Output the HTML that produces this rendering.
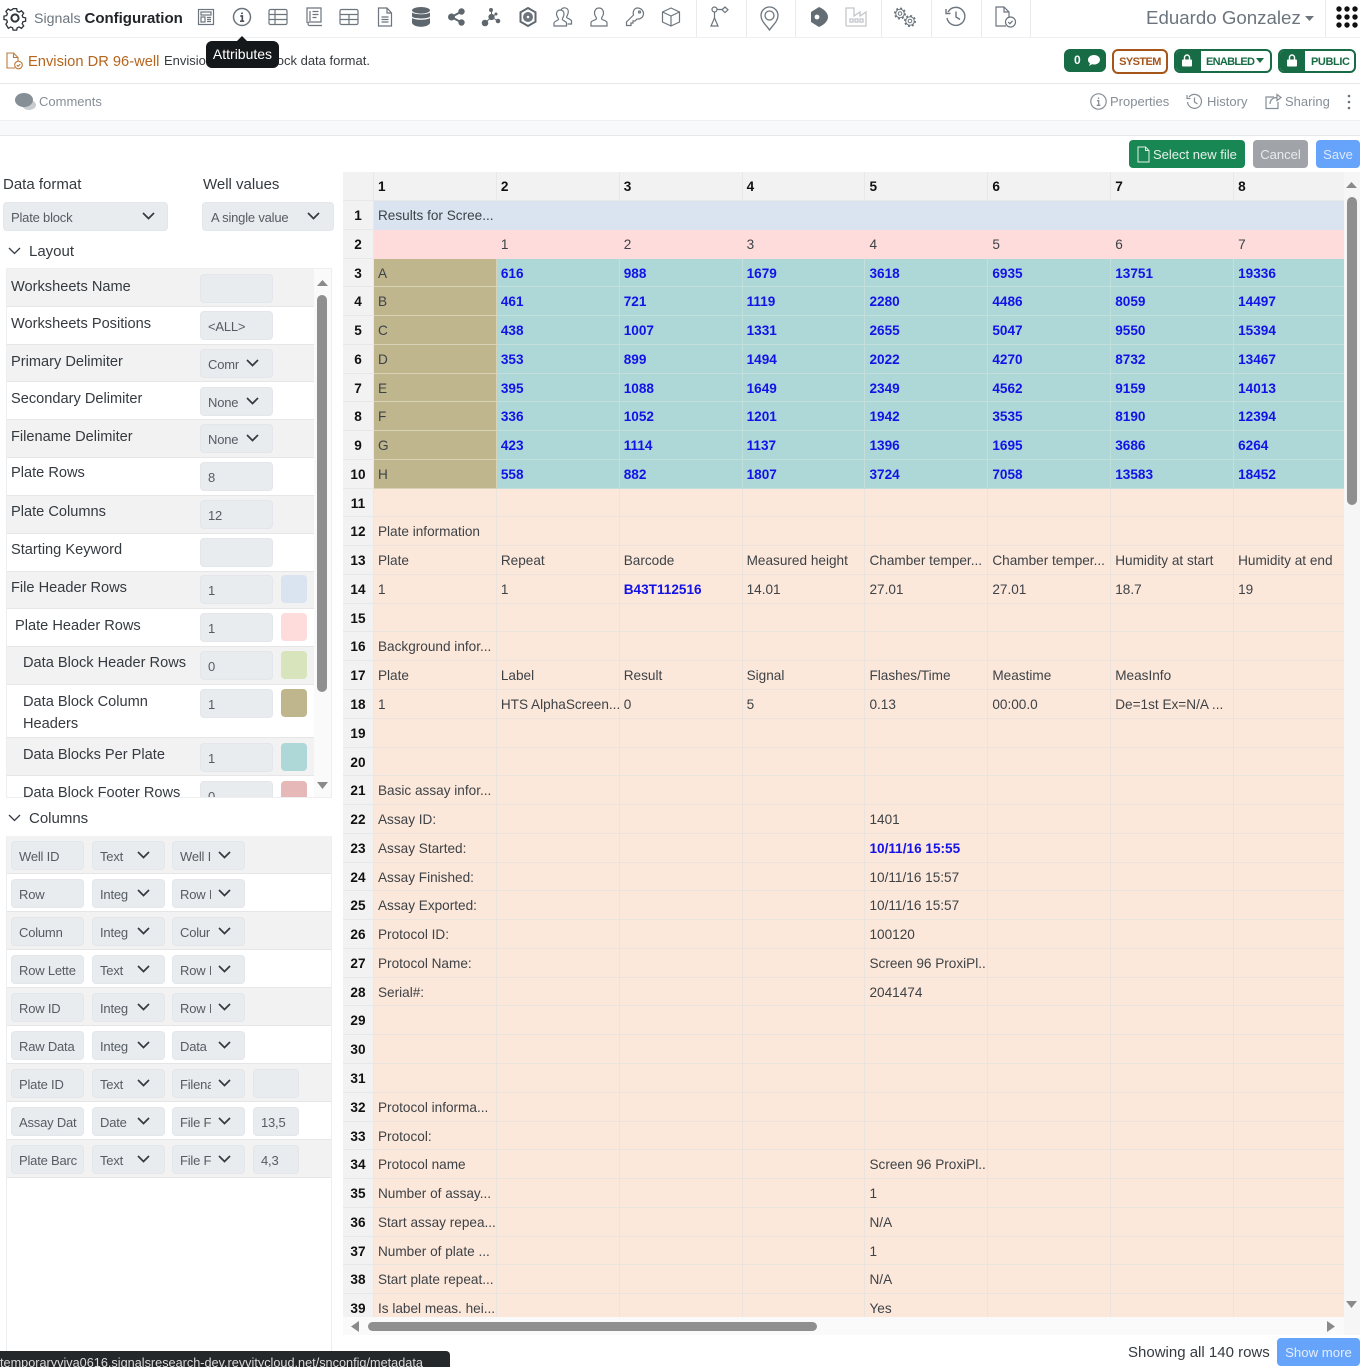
<!DOCTYPE html>
<html lang="en"><head><meta charset="utf-8"><title>Signals Configuration</title>
<style>
*{box-sizing:border-box}
html,body{margin:0;padding:0;background:#fff}
body{width:1360px;height:1367px;position:relative;overflow:hidden;font-family:"Liberation Sans",sans-serif;font-size:14px;color:#343a40}
.a{position:absolute;white-space:nowrap}
.line{position:absolute;background:#e9ecef}
svg{position:absolute;overflow:visible}
.ic{fill:none;stroke:#6c757d;stroke-width:1.2}
.t{position:absolute;left:343px;top:172px;width:1001px;height:1145px;overflow:hidden}
.r{display:flex;height:28.77px}
.r>div{height:100%;width:123px;padding:0 4px;line-height:30px;font-size:13.6px;white-space:nowrap;overflow:hidden;border-right:1px solid #e6e3df;border-bottom:1px solid #e6e3df;color:#3d4247}
.r>div:first-child{width:31px;background:#f2f2f2;text-align:center;font-weight:bold;color:#111;padding:0;border-color:#e8e8e8}
.r>div:last-child{width:110px;border-right:0}
.r.h{height:29px}
.h>div{background:#f2f2f2;font-weight:bold;color:#111;line-height:29px;border-color:#e8e8e8}
.b>div{background:#dae4f0;border-color:#dae4f0}
.p>div{background:#fddcdb;border-color:#fddcdb}
.d>div{background:#aed8d7;border-color:#c4dedb;font-weight:bold;color:#1212e8}
.d>div:nth-child(2){background:#bfb68e;font-weight:normal;color:#3d4247;border-color:#d8d2b6}
.o>div{background:#fce8da;border-color:#ebe4de}
.r>div:first-child{background:#f2f2f2;color:#111;font-weight:bold;border-color:#e8e8e8}
.h>div:first-child{line-height:29px}
.bl{font-weight:bold;color:#1212e8!important}
.lr{position:absolute;left:7px;width:307px;border-bottom:1px solid #e6e6e6}
.gr{background:#f2f2f2}
.lr span{position:absolute;top:6px;font-size:14.6px;line-height:22px;color:#343a40;white-space:nowrap}
.inp{position:absolute;height:29px;background:#e9ecef;border:1px solid #e3e6ea;border-radius:4px;font-size:13px;letter-spacing:-.2px;color:#555c63;line-height:29px;padding-left:7px;white-space:nowrap;overflow:hidden}
.cl{display:block;overflow:hidden}
.sw{position:absolute;left:281px;width:26px;height:28px;border-radius:4px}
.cr{position:absolute;left:7px;width:324px;height:38px;border-bottom:1px solid #e6e6e6}
.chev{fill:none;stroke:#343a40;stroke-width:1.7}
</style></head><body>

<!-- top bar -->
<svg style="left:3px;top:6px" width="24" height="24" viewBox="0 0 24 24"><path class="ic" style="stroke:#2f343a;stroke-width:1.5" d="M10 2h4l.6 3 2.2 1 2.6-1.600 2.600 2.800-1.700 2.500.9 2.200 3 .6v3.800l-3 .6-.9 2.200 1.700 2.500-2.600 2.800-2.600-1.600-2.200 1-.6 2.600h-4l-.6-2.600-2.200-1-2.600 1.600L1.800 19.600l1.700-2.500-.9-2.200-3-.6v-3.800l3-.6.9-2.200L1.800 5.200 4.400 2.400 7 4l2.400-1z" transform="scale(.88) translate(1.500,1)"/><circle cx="12" cy="12" r="3.600" fill="none" stroke="#2f343a" stroke-width="2"/></svg>
<div class="a" style="left:34px;top:9px;font-size:14.200px;line-height:20px;color:#6c757d">Signals <b style="color:#212529;font-size:15px">Configuration</b></div>

<svg style="left:197px;top:8px" width="18" height="18" viewBox="0 0 18 18"><g class="ic"><rect x="1.500" y="1.500" width="15" height="15"/><rect x="4" y="4" width="10" height="3"/><rect x="4" y="9" width="4" height="5"/><path d="M10 9.500h4M10 11.500h4M10 13.500h4"/></g></svg>
<svg style="left:232px;top:7px" width="20" height="20" viewBox="0 0 20 20"><circle class="ic" style="stroke-width:1.500" cx="10" cy="10" r="8.500"/><path d="M10 5.500v1.600M8.300 9h2v5M8 14.200h4.200" fill="none" stroke="#495057" stroke-width="1.700"/></svg>
<svg style="left:268px;top:8px" width="20" height="18" viewBox="0 0 20 18"><g class="ic"><rect x="1" y="1.500" width="18" height="15" rx="1.500"/><path d="M1 6.500h18M1 11.500h18M7 1.500v15"/></g></svg>
<svg style="left:305px;top:7px" width="18" height="20" viewBox="0 0 18 20"><g class="ic"><path d="M2 16V1h14v14H4a2 2 0 0 0 0 3.500h13"/><path d="M5 4v10M7.500 4.500h6M7.500 7.500h6M7.500 10.500h4"/></g></svg>
<svg style="left:339px;top:8px" width="20" height="18" viewBox="0 0 20 18"><g class="ic"><rect x="1" y="1.500" width="18" height="15" rx="1.500"/><path d="M1 6.500h18M1 11.500h18M10 6.500v10"/></g></svg>
<svg style="left:377px;top:7px" width="16" height="20" viewBox="0 0 16 20"><g class="ic"><path d="M1.500 1h8.500l4.500 5v13h-13zM10 1v5h4.500"/><path d="M4.500 10h7M4.500 12.500h7M4.500 15h7"/></g></svg>
<svg style="left:412px;top:7px" width="18" height="20" viewBox="0 0 18 20"><g fill="#5f676e"><ellipse cx="9" cy="3.300" rx="9" ry="3.300"/><path d="M0 5.500c2 2.300 16 2.300 18 0V9.500c-2 2.600-16 2.600-18 0zM0 11c2 2.300 16 2.300 18 0v5c-2 5-16 5-18 0z"/></g></svg>
<svg style="left:448px;top:8px" width="18" height="18" viewBox="0 0 18 18"><g fill="#5f676e"><circle cx="3.500" cy="9" r="3.500"/><circle cx="13.500" cy="3.500" r="3.200"/><circle cx="13.500" cy="14.500" r="3.200"/><path d="M3.500 9l10-5.500M3.500 9l10 5.500" stroke="#5f676e" stroke-width="2"/></g></svg>
<svg style="left:482px;top:8px" width="19" height="18" viewBox="0 0 19 18"><g fill="#5f676e" stroke="#5f676e"><circle cx="9.500" cy="9" r="2.600"/><circle cx="9" cy="2" r="1.500"/><circle cx="3" cy="15" r="2.800"/><circle cx="16" cy="13" r="1.800"/><circle cx="14" cy="6" r="1"/><path d="M9.500 9V2M9.500 9L3 15M9.500 9L16 13M9.500 9L14 6"/></g></svg>
<svg style="left:519px;top:7px" width="18" height="20" viewBox="0 0 18 20"><path d="M9 1l7.500 4.300v9.400L9 19l-7.500-4.300V5.300z" fill="none" stroke="#5f676e" stroke-width="2"/><circle cx="9" cy="10" r="5" fill="#6c757d"/><circle cx="9" cy="10" r="1.300" fill="#fff"/></svg>
<svg style="left:553px;top:7px" width="20" height="20" viewBox="0 0 20 20"><g class="ic"><path d="M1 19v-3c0-1.500 4-2.500 4.500-3.500S3.500 10 3.500 7c0-2.500 1.500-4 3.800-4S11 4.500 11 7c0 3-2 4.500-1.700 5.500S13.500 14.500 13.500 16v3z"/><path d="M8 3c.7-1.500 2-2.200 3.600-2.200 2.300 0 3.700 1.500 3.700 4 0 3-2 4.500-1.700 5.500S18.500 12.500 18.500 14v3h-4"/></g></svg>
<svg style="left:590px;top:7px" width="18" height="20" viewBox="0 0 18 20"><path class="ic" d="M1 19v-3.500c0-1.700 5-2.500 5.500-3.700S4.500 9.500 4.500 6c0-3 1.800-5 4.500-5s4.500 2 4.500 5c0 3.500-2.500 4.600-2 5.800S17 13.800 17 15.500V19z"/></svg>
<svg style="left:625px;top:7px" width="20" height="20" viewBox="0 0 20 20"><g class="ic"><path d="M12.500 1c3.500 0 6 2.700 6 5.500 0 3.500-3 6-6.500 5.500l-2 2H8v2H6v2.500H1.500v-3.500l7-7C7.500 4 9.500 1 12.500 1z"/><circle cx="14.500" cy="5" r="1"/></g></svg>
<svg style="left:661px;top:7px" width="20" height="20" viewBox="0 0 20 20"><g class="ic"><path d="M10 1l8.500 4v10L10 19l-8.500-4V5zM1.500 5L10 9l8.500-4M10 9v10"/></g></svg>
<svg style="left:710px;top:6px" width="20" height="22" viewBox="0 0 20 22"><g class="ic"><circle cx="4.500" cy="3.500" r="2.500"/><path d="M15 1l3 2.800-3 2.800-3-2.800zM7 3.500h5M4.500 6v6"/><path d="M4.500 12l3.500 8H1z"/></g></svg>
<svg style="left:760px;top:6px" width="19" height="25" viewBox="0 0 19 25"><g class="ic" style="stroke-width:1.300"><path d="M9.500 24C6 19 1 15 1 9.500a8.500 8.500 0 0 1 17 0C18 15 13 19 9.500 24z"/><circle cx="9.500" cy="9.500" r="4.500"/></g></svg>
<svg style="left:810px;top:7px" width="18" height="20" viewBox="0 0 18 20"><path d="M1 5L9 0C14 2 18 6 18 10S14 18 9 20L1 15Z" fill="#656d74"/><circle cx="7" cy="10" r="2.400" fill="#fff"/></svg>
<svg style="left:845px;top:7px" width="22" height="20" viewBox="0 0 22 20"><g fill="none" stroke="#c3c7cb" stroke-width="1.300"><path d="M1 1v17a1 1 0 0 0 1 1h19V5l-6 4V5l-6 4V1z" /><rect x="5" y="12" width="3" height="3"/><rect x="10" y="12" width="3" height="3"/><rect x="15" y="12" width="3" height="3"/></g></svg>
<svg style="left:893px;top:7px" width="24" height="20" viewBox="0 0 24 20"><g class="ic" style="stroke-width:1"><circle cx="7" cy="6.500" r="1.800"/><circle cx="7" cy="6.500" r="4.300"/><circle cx="7" cy="6.500" r="5.300" stroke-dasharray="2 2.160" stroke-width="1.500"/><circle cx="17" cy="14" r="1.800"/><circle cx="17" cy="14" r="4.300"/><circle cx="17" cy="14" r="5.300" stroke-dasharray="2 2.160" stroke-width="1.500"/></g></svg>
<svg style="left:945px;top:6px" width="21" height="21" viewBox="0 0 21 21"><g class="ic" style="stroke-width:1.400"><path d="M3 6a9 9 0 1 1-1 6"/><path d="M1 3v4.500h4.500M11 5.500V11l4 2.500"/></g></svg>
<svg style="left:994px;top:6px" width="23" height="22" viewBox="0 0 23 22"><g class="ic"><path d="M12 20H2V1h8l5 5v6M10 1v5h5"/><circle cx="16.500" cy="16" r="5"/><path d="M14.200 16l1.700 1.700 2.700-2.900"/></g></svg>

<div class="line" style="left:696px;top:0;width:1px;height:37px"></div>
<div class="line" style="left:746px;top:0;width:1px;height:37px"></div>
<div class="line" style="left:795px;top:0;width:1px;height:37px"></div>
<div class="line" style="left:881px;top:0;width:1px;height:37px"></div>
<div class="line" style="left:931px;top:0;width:1px;height:37px"></div>
<div class="line" style="left:981px;top:0;width:1px;height:37px"></div>
<div class="line" style="left:1030px;top:0;width:1px;height:37px"></div>
<div class="line" style="left:1325px;top:0;width:1px;height:37px"></div>
<div class="line" style="left:0;top:37px;width:1360px;height:1px;background:#eef0f2"></div>

<div class="a" style="left:1146px;top:7px;font-size:18.700px;line-height:22px;color:#6c757d">Eduardo Gonzalez</div>
<svg style="left:1305px;top:16px" width="9" height="5"><path d="M0 0h9L4.500 5z" fill="#6c757d"/></svg>
<svg style="left:1336px;top:6px" width="22" height="24" viewBox="0 0 22 24"><g fill="#111"><circle cx="3" cy="3" r="2.700"/><circle cx="11" cy="3" r="2.700"/><circle cx="19" cy="3" r="2.700"/><circle cx="3" cy="11" r="2.700"/><circle cx="11" cy="11" r="2.700"/><circle cx="19" cy="11" r="2.700"/><circle cx="3" cy="19" r="2.700"/><circle cx="11" cy="19" r="2.700"/><circle cx="19" cy="19" r="2.700"/></g></svg>

<!-- title row -->
<svg style="left:6px;top:52px" width="18" height="18" viewBox="0 0 18 18"><g fill="none" stroke="#bd7a3d" stroke-width="1.100"><path d="M9 16H1V1h6.500L12 5.500V9M7.500 1v4.500H12"/><circle cx="12.500" cy="13" r="3.800"/><path d="M10.800 13l1.300 1.300 2.100-2.200"/></g></svg>
<div class="a" style="left:28px;top:52px;font-size:14.700px;line-height:21px;color:#b5651d">Envision DR 96-well</div>
<div class="a" style="left:164px;top:52px;font-size:13px;line-height:17px;color:#343a40">Envision 96 plate block data format.</div>
<div class="line" style="left:0;top:83px;width:1360px;height:1px;background:#e6e8ea"></div>

<div class="a" style="left:1064px;top:49px;width:42px;height:23px;background:#176b45;border-radius:6px"></div>
<div class="a" style="left:1074px;top:53px;font-size:12px;font-weight:bold;color:#fff;line-height:15px">0</div>
<svg style="left:1088px;top:55px" width="12" height="11" viewBox="0 0 12 11"><path d="M6 0c3.300 0 6 2 6 4.700S9.300 9.500 6 9.500c-.7 0-1.300 0-2-.2L1 11l1-2.700C.7 7.500 0 6.200 0 4.700 0 2 2.700 0 6 0z" fill="#fff"/></svg>
<div class="a" style="left:1112px;top:49px;width:56px;height:25px;border:2px solid #a5541a;border-radius:6px;color:#a5541a;font-size:11px;letter-spacing:-.6px;font-weight:bold;line-height:23px;text-align:center">SYSTEM</div>
<div class="a" style="left:1174px;top:49px;width:98px;height:24px;border:2px solid #176b45;border-radius:6px;background:#fff;overflow:hidden"><div style="position:absolute;left:0;top:0;width:25px;height:22px;background:#176b45"></div><div style="position:absolute;left:30px;top:0;font-size:11px;letter-spacing:-.7px;font-weight:bold;line-height:22px;color:#176b45">ENABLED</div></div>
<svg style="left:1256px;top:58px" width="8" height="5"><path d="M0 0h8L4 5z" fill="#176b45"/></svg>
<svg style="left:1182px;top:54px" width="10" height="13" viewBox="0 0 10 13"><path d="M2.500 6V3.500a2.500 2.500 0 0 1 5 0V6" fill="none" stroke="#fff" stroke-width="1.400"/><rect y="5.500" width="10" height="7" rx="1" fill="#fff"/></svg>
<div class="a" style="left:1278px;top:49px;width:78px;height:24px;border:2px solid #176b45;border-radius:6px;background:#fff;overflow:hidden"><div style="position:absolute;left:0;top:0;width:25px;height:22px;background:#176b45"></div><div style="position:absolute;left:31px;top:0;font-size:11px;letter-spacing:-.4px;font-weight:bold;line-height:22px;color:#176b45">PUBLIC</div></div>
<svg style="left:1287px;top:54px" width="10" height="13" viewBox="0 0 10 13"><path d="M2.500 6V3.500a2.500 2.500 0 0 1 5 0V6" fill="none" stroke="#fff" stroke-width="1.400"/><rect y="5.500" width="10" height="7" rx="1" fill="#fff"/></svg>

<!-- tooltip -->
<div class="a" style="left:206px;top:41px;width:73px;height:27px;background:#15181b;border-radius:6px;color:#fff;font-size:14px;line-height:27px;text-align:center">Attributes</div>
<svg style="left:237px;top:36px" width="10" height="5"><path d="M0 5L5 0l5 5z" fill="#15181b"/></svg>

<!-- comments row -->
<svg style="left:15px;top:92px" width="22" height="20" viewBox="0 0 22 20"><ellipse cx="14" cy="13" rx="7" ry="5" fill="#c9cccf"/><ellipse cx="9" cy="8" rx="9" ry="7" fill="#868e96"/></svg>
<div class="a" style="left:39px;top:93px;font-size:13px;line-height:17px;color:#868e96">Comments</div>
<svg style="left:1090px;top:93px" width="17" height="17" viewBox="0 0 17 17"><circle cx="8.500" cy="8.500" r="7.700" class="ic" style="stroke:#868e96"/><path d="M8.500 4.500v1.500M7 7.700h1.700v4.500M6.700 12.300h3.700" fill="none" stroke="#868e96" stroke-width="1.300"/></svg>
<div class="a" style="left:1110px;top:93px;font-size:13px;line-height:17px;color:#868e96">Properties</div>
<svg style="left:1186px;top:93px" width="17" height="17" viewBox="0 0 17 17"><g fill="none" stroke="#868e96" stroke-width="1.200"><path d="M3 4a7 7 0 1 1-1.500 5"/><path d="M1 2v3.500h3.500M8.500 4.500V9l3 2"/></g></svg>
<div class="a" style="left:1207px;top:93px;font-size:13px;line-height:17px;color:#868e96">History</div>
<svg style="left:1265px;top:93px" width="17" height="17" viewBox="0 0 17 17"><g fill="none" stroke="#868e96" stroke-width="1.200"><path d="M9 4H1v11.500h12V9"/><path d="M5 11c0-4 3-6.500 7-6.500M12 1.500l4 3-4 3z"/></g></svg>
<div class="a" style="left:1285px;top:93px;font-size:13px;line-height:17px;color:#868e96">Sharing</div>
<svg style="left:1347px;top:94px" width="4" height="16"><g fill="#6c757d"><circle cx="2" cy="2" r="1.300"/><circle cx="2" cy="8" r="1.300"/><circle cx="2" cy="14" r="1.300"/></g></svg>
<div class="line" style="left:0;top:120px;width:1360px;height:1px;background:#eef0f2"></div>
<div class="a" style="left:0;top:121px;width:1360px;height:15px;background:#f8f9fa;border-bottom:1px solid #e6e9ee"></div>

<!-- action buttons -->
<div class="a" style="left:1129px;top:140px;width:116px;height:28px;background:#198754;border-radius:4px;color:#e4f1ea;font-size:13px;line-height:29px;padding-left:24px">Select new file</div>
<svg style="left:1137px;top:146px" width="13" height="17" viewBox="0 0 13 17"><path d="M1 1h7.500L12 4.500V16H1zM8.500 1v3.500H12" fill="none" stroke="#e4f1ea" stroke-width="1"/></svg>
<div class="a" style="left:1253px;top:140px;width:55px;height:28px;background:#a0a4a9;border-radius:4px;color:#e9eaeb;font-size:13px;line-height:29px;text-align:center">Cancel</div>
<div class="a" style="left:1316px;top:140px;width:44px;height:28px;background:#66a3fb;border-radius:4px;color:#dde9fd;font-size:13px;line-height:29px;text-align:center">Save</div>

<!-- left panel -->
<div class="a" style="left:3px;top:176px;font-size:15px;line-height:18px">Data format</div>
<div class="a" style="left:203px;top:176px;font-size:15px;line-height:18px">Well values</div>
<div class="inp" style="left:3px;top:202px;width:165px;height:29px">Plate block</div>
<svg style="left:142px;top:212px" width="13" height="8"><path class="chev" d="M1 1l5.500 5.500L12 1"/></svg>
<div class="inp" style="left:202px;top:202px;width:132px;height:29px;padding-left:8px">A single value</div>
<svg style="left:307px;top:212px" width="13" height="8"><path class="chev" d="M1 1l5.500 5.500L12 1"/></svg>
<svg style="left:8px;top:247px" width="13" height="8"><path class="chev" style="stroke-width:1.300" d="M1 1l5.500 5.500L12 1"/></svg>
<div class="a" style="left:29px;top:243px;font-size:15px;line-height:18px">Layout</div>

<div class="a" style="left:6px;top:268px;width:326px;height:530px;border:1px solid #eceeef;overflow:hidden">
 <div style="position:absolute;left:-7px;top:-269px;width:340px;height:1100px">
  <div class="lr gr" style="top:269px;height:38px"><span style="left:4px;top:7px">Worksheets Name</span></div>
  <div class="lr" style="top:307px;height:38px"><span style="left:4px;top:6px">Worksheets Positions</span></div>
  <div class="lr gr" style="top:345px;height:37px"><span style="left:4px">Primary Delimiter</span></div>
  <div class="lr" style="top:382px;height:38px"><span style="left:4px">Secondary Delimiter</span></div>
  <div class="lr gr" style="top:420px;height:38px"><span style="left:4px">Filename Delimiter</span></div>
  <div class="lr" style="top:458px;height:38px"><span style="left:4px;top:4px">Plate Rows</span></div>
  <div class="lr gr" style="top:496px;height:38px"><span style="left:4px;top:5px">Plate Columns</span></div>
  <div class="lr" style="top:534px;height:38px"><span style="left:4px;top:5px">Starting Keyword</span></div>
  <div class="lr gr" style="top:572px;height:37px"><span style="left:4px;top:5px">File Header Rows</span></div>
  <div class="lr" style="top:609px;height:38px"><span style="left:8px;top:6px">Plate Header Rows</span></div>
  <div class="lr gr" style="top:647px;height:38px"><span style="left:16px;top:5px">Data Block Header Rows</span></div>
  <div class="lr" style="top:685px;height:53px"><span style="left:16px;top:6px">Data Block Column<br>Headers</span></div>
  <div class="lr gr" style="top:738px;height:38px"><span style="left:16px;top:6px">Data Blocks Per Plate</span></div>
  <div class="lr" style="top:776px;height:38px"><span style="left:16px">Data Block Footer Rows</span></div>
  <div class="inp" style="left:200px;top:274px;width:73px"></div>
  <div class="inp" style="left:200px;top:311px;width:73px">&lt;ALL&gt;</div>
  <div class="inp" style="left:200px;top:349px;width:73px"><span class="cl" style="width:31px">Comma</span></div>
  <div class="inp" style="left:200px;top:387px;width:73px">None</div>
  <div class="inp" style="left:200px;top:424px;width:73px">None</div>
  <div class="inp" style="left:200px;top:462px;width:73px">8</div>
  <div class="inp" style="left:200px;top:500px;width:73px">12</div>
  <div class="inp" style="left:200px;top:538px;width:73px"></div>
  <div class="inp" style="left:200px;top:575px;width:73px">1</div>
  <div class="inp" style="left:200px;top:613px;width:73px">1</div>
  <div class="inp" style="left:200px;top:651px;width:73px">0</div>
  <div class="inp" style="left:200px;top:689px;width:73px">1</div>
  <div class="inp" style="left:200px;top:743px;width:73px">1</div>
  <div class="inp" style="left:200px;top:781px;width:73px">0</div>
  <svg style="left:246px;top:359px" width="13" height="8"><path class="chev" d="M1 1l5.500 5.500L12 1"/></svg>
  <svg style="left:246px;top:397px" width="13" height="8"><path class="chev" d="M1 1l5.500 5.500L12 1"/></svg>
  <svg style="left:246px;top:434px" width="13" height="8"><path class="chev" d="M1 1l5.500 5.500L12 1"/></svg>
  <div class="sw" style="top:575px;background:#dae4f0"></div>
  <div class="sw" style="top:613px;background:#fddcdb"></div>
  <div class="sw" style="top:651px;background:#d8e4bc"></div>
  <div class="sw" style="top:689px;background:#bfb68e"></div>
  <div class="sw" style="top:743px;background:#aed8d7"></div>
  <div class="sw" style="top:781px;background:#e6b8b7"></div>
  <div style="position:absolute;left:314px;top:269px;width:17px;height:530px;background:#fafafa"></div>
  <svg style="left:317px;top:279px" width="11" height="8"><path d="M0 7L5.500 1 11 7z" fill="#8a8a8a"/></svg>
  <div style="position:absolute;left:317px;top:295px;width:10px;height:397px;background:#8f8f8f;border-radius:5px"></div>
  <svg style="left:317px;top:782px" width="11" height="8"><path d="M0 0L5.500 7 11 0z" fill="#8a8a8a"/></svg>
 </div>
</div>

<svg style="left:8px;top:814px" width="13" height="8"><path class="chev" style="stroke-width:1.300" d="M1 1l5.500 5.500L12 1"/></svg>
<div class="a" style="left:29px;top:810px;font-size:15px;line-height:18px">Columns</div>

<div class="line" style="left:6px;top:836px;width:1px;height:531px;background:#eceeef"></div>
<div class="line" style="left:331px;top:836px;width:1px;height:531px;background:#eceeef"></div>

<div class="cr gr" style="top:836px"></div>
<div class="cr" style="top:874px"></div>
<div class="cr gr" style="top:912px"></div>
<div class="cr" style="top:950px"></div>
<div class="cr gr" style="top:988px"></div>
<div class="cr" style="top:1026px"></div>
<div class="cr gr" style="top:1064px"></div>
<div class="cr" style="top:1102px"></div>
<div class="cr gr" style="top:1140px"></div>

<div class="inp" style="left:11px;top:841px;width:73px">Well ID</div><div class="inp" style="left:92px;top:841px;width:73px">Text</div><div class="inp" style="left:172px;top:841px;width:73px">Well I</div>
<div class="inp" style="left:11px;top:879px;width:73px">Row</div><div class="inp" style="left:92px;top:879px;width:73px">Integ</div><div class="inp" style="left:172px;top:879px;width:73px"><span class="cl" style="width:31px">Row I</span></div>
<div class="inp" style="left:11px;top:917px;width:73px">Column</div><div class="inp" style="left:92px;top:917px;width:73px">Integ</div><div class="inp" style="left:172px;top:917px;width:73px"><span class="cl" style="width:30px">Column</span></div>
<div class="inp" style="left:11px;top:955px;width:73px">Row Lette</div><div class="inp" style="left:92px;top:955px;width:73px">Text</div><div class="inp" style="left:172px;top:955px;width:73px"><span class="cl" style="width:31px">Row I</span></div>
<div class="inp" style="left:11px;top:993px;width:73px">Row ID</div><div class="inp" style="left:92px;top:993px;width:73px">Integ</div><div class="inp" style="left:172px;top:993px;width:73px"><span class="cl" style="width:31px">Row I</span></div>
<div class="inp" style="left:11px;top:1031px;width:73px">Raw Data</div><div class="inp" style="left:92px;top:1031px;width:73px">Integ</div><div class="inp" style="left:172px;top:1031px;width:73px">Data</div>
<div class="inp" style="left:11px;top:1069px;width:73px">Plate ID</div><div class="inp" style="left:92px;top:1069px;width:73px">Text</div><div class="inp" style="left:172px;top:1069px;width:73px"><span class="cl" style="width:31px">Filename</span></div><div class="inp" style="left:253px;top:1069px;width:46px"></div>
<div class="inp" style="left:11px;top:1107px;width:73px">Assay Dat</div><div class="inp" style="left:92px;top:1107px;width:73px"><span class="cl" style="width:30px">Date T</span></div><div class="inp" style="left:172px;top:1107px;width:73px">File F</div><div class="inp" style="left:253px;top:1107px;width:46px">13,5</div>
<div class="inp" style="left:11px;top:1145px;width:73px">Plate Barc</div><div class="inp" style="left:92px;top:1145px;width:73px">Text</div><div class="inp" style="left:172px;top:1145px;width:73px">File F</div><div class="inp" style="left:253px;top:1145px;width:46px">4,3</div>

<svg style="left:0;top:0" width="1" height="1"><defs><path id="cv" d="M1 1l5.500 5.500L12 1" fill="none" stroke="#343a40" stroke-width="1.700"/></defs></svg>
<svg style="left:137px;top:851px" width="13" height="8"><use href="#cv"/></svg><svg style="left:218px;top:851px" width="13" height="8"><use href="#cv"/></svg>
<svg style="left:137px;top:889px" width="13" height="8"><use href="#cv"/></svg><svg style="left:218px;top:889px" width="13" height="8"><use href="#cv"/></svg>
<svg style="left:137px;top:927px" width="13" height="8"><use href="#cv"/></svg><svg style="left:218px;top:927px" width="13" height="8"><use href="#cv"/></svg>
<svg style="left:137px;top:965px" width="13" height="8"><use href="#cv"/></svg><svg style="left:218px;top:965px" width="13" height="8"><use href="#cv"/></svg>
<svg style="left:137px;top:1003px" width="13" height="8"><use href="#cv"/></svg><svg style="left:218px;top:1003px" width="13" height="8"><use href="#cv"/></svg>
<svg style="left:137px;top:1041px" width="13" height="8"><use href="#cv"/></svg><svg style="left:218px;top:1041px" width="13" height="8"><use href="#cv"/></svg>
<svg style="left:137px;top:1079px" width="13" height="8"><use href="#cv"/></svg><svg style="left:218px;top:1079px" width="13" height="8"><use href="#cv"/></svg>
<svg style="left:137px;top:1117px" width="13" height="8"><use href="#cv"/></svg><svg style="left:218px;top:1117px" width="13" height="8"><use href="#cv"/></svg>
<svg style="left:137px;top:1155px" width="13" height="8"><use href="#cv"/></svg><svg style="left:218px;top:1155px" width="13" height="8"><use href="#cv"/></svg>

<!-- data table -->
<div class="t">
<div class="r h"><div></div><div>1</div><div>2</div><div>3</div><div>4</div><div>5</div><div>6</div><div>7</div><div>8</div></div>
<div class="r b"><div>1</div><div>Results for Scree...</div><div></div><div></div><div></div><div></div><div></div><div></div><div></div></div>
<div class="r p"><div>2</div><div></div><div>1</div><div>2</div><div>3</div><div>4</div><div>5</div><div>6</div><div>7</div></div>
<div class="r d"><div>3</div><div>A</div><div>616</div><div>988</div><div>1679</div><div>3618</div><div>6935</div><div>13751</div><div>19336</div></div>
<div class="r d"><div>4</div><div>B</div><div>461</div><div>721</div><div>1119</div><div>2280</div><div>4486</div><div>8059</div><div>14497</div></div>
<div class="r d"><div>5</div><div>C</div><div>438</div><div>1007</div><div>1331</div><div>2655</div><div>5047</div><div>9550</div><div>15394</div></div>
<div class="r d"><div>6</div><div>D</div><div>353</div><div>899</div><div>1494</div><div>2022</div><div>4270</div><div>8732</div><div>13467</div></div>
<div class="r d"><div>7</div><div>E</div><div>395</div><div>1088</div><div>1649</div><div>2349</div><div>4562</div><div>9159</div><div>14013</div></div>
<div class="r d"><div>8</div><div>F</div><div>336</div><div>1052</div><div>1201</div><div>1942</div><div>3535</div><div>8190</div><div>12394</div></div>
<div class="r d"><div>9</div><div>G</div><div>423</div><div>1114</div><div>1137</div><div>1396</div><div>1695</div><div>3686</div><div>6264</div></div>
<div class="r d"><div>10</div><div>H</div><div>558</div><div>882</div><div>1807</div><div>3724</div><div>7058</div><div>13583</div><div>18452</div></div>
<div class="r o"><div>11</div><div></div><div></div><div></div><div></div><div></div><div></div><div></div><div></div></div>
<div class="r o"><div>12</div><div>Plate information</div><div></div><div></div><div></div><div></div><div></div><div></div><div></div></div>
<div class="r o"><div>13</div><div>Plate</div><div>Repeat</div><div>Barcode</div><div>Measured height</div><div>Chamber temper...</div><div>Chamber temper...</div><div>Humidity at start</div><div>Humidity at end</div></div>
<div class="r o"><div>14</div><div>1</div><div>1</div><div class="bl">B43T112516</div><div>14.01</div><div>27.01</div><div>27.01</div><div>18.7</div><div>19</div></div>
<div class="r o"><div>15</div><div></div><div></div><div></div><div></div><div></div><div></div><div></div><div></div></div>
<div class="r o"><div>16</div><div>Background infor...</div><div></div><div></div><div></div><div></div><div></div><div></div><div></div></div>
<div class="r o"><div>17</div><div>Plate</div><div>Label</div><div>Result</div><div>Signal</div><div>Flashes/Time</div><div>Meastime</div><div>MeasInfo</div><div></div></div>
<div class="r o"><div>18</div><div>1</div><div>HTS AlphaScreen...</div><div>0</div><div>5</div><div>0.13</div><div>00:00.0</div><div>De=1st Ex=N/A ...</div><div></div></div>
<div class="r o"><div>19</div><div></div><div></div><div></div><div></div><div></div><div></div><div></div><div></div></div>
<div class="r o"><div>20</div><div></div><div></div><div></div><div></div><div></div><div></div><div></div><div></div></div>
<div class="r o"><div>21</div><div>Basic assay infor...</div><div></div><div></div><div></div><div></div><div></div><div></div><div></div></div>
<div class="r o"><div>22</div><div>Assay ID:</div><div></div><div></div><div></div><div>1401</div><div></div><div></div><div></div></div>
<div class="r o"><div>23</div><div>Assay Started:</div><div></div><div></div><div></div><div class="bl">10/11/16 15:55</div><div></div><div></div><div></div></div>
<div class="r o"><div>24</div><div>Assay Finished:</div><div></div><div></div><div></div><div>10/11/16 15:57</div><div></div><div></div><div></div></div>
<div class="r o"><div>25</div><div>Assay Exported:</div><div></div><div></div><div></div><div>10/11/16 15:57</div><div></div><div></div><div></div></div>
<div class="r o"><div>26</div><div>Protocol ID:</div><div></div><div></div><div></div><div>100120</div><div></div><div></div><div></div></div>
<div class="r o"><div>27</div><div>Protocol Name:</div><div></div><div></div><div></div><div>Screen 96 ProxiPl...</div><div></div><div></div><div></div></div>
<div class="r o"><div>28</div><div>Serial#:</div><div></div><div></div><div></div><div>2041474</div><div></div><div></div><div></div></div>
<div class="r o"><div>29</div><div></div><div></div><div></div><div></div><div></div><div></div><div></div><div></div></div>
<div class="r o"><div>30</div><div></div><div></div><div></div><div></div><div></div><div></div><div></div><div></div></div>
<div class="r o"><div>31</div><div></div><div></div><div></div><div></div><div></div><div></div><div></div><div></div></div>
<div class="r o"><div>32</div><div>Protocol informa...</div><div></div><div></div><div></div><div></div><div></div><div></div><div></div></div>
<div class="r o"><div>33</div><div>Protocol:</div><div></div><div></div><div></div><div></div><div></div><div></div><div></div></div>
<div class="r o"><div>34</div><div>Protocol name</div><div></div><div></div><div></div><div>Screen 96 ProxiPl...</div><div></div><div></div><div></div></div>
<div class="r o"><div>35</div><div>Number of assay...</div><div></div><div></div><div></div><div>1</div><div></div><div></div><div></div></div>
<div class="r o"><div>36</div><div>Start assay repea...</div><div></div><div></div><div></div><div>N/A</div><div></div><div></div><div></div></div>
<div class="r o"><div>37</div><div>Number of plate ...</div><div></div><div></div><div></div><div>1</div><div></div><div></div><div></div></div>
<div class="r o"><div>38</div><div>Start plate repeat...</div><div></div><div></div><div></div><div>N/A</div><div></div><div></div><div></div></div>
<div class="r o"><div>39</div><div>Is label meas. hei...</div><div></div><div></div><div></div><div>Yes</div><div></div><div></div><div></div></div>
</div>

<!-- table scrollbars -->
<div class="a" style="left:1344px;top:172px;width:16px;height:1163px;background:#f6f6f6"></div>
<svg style="left:1346px;top:181px" width="11" height="8"><path d="M0 7L5.500 1 11 7z" fill="#8a8a8a"/></svg>
<div class="a" style="left:1347px;top:197px;width:10px;height:308px;background:#8f8f8f;border-radius:5px"></div>
<svg style="left:1346px;top:1301px" width="11" height="8"><path d="M0 0L5.500 7 11 0z" fill="#8a8a8a"/></svg>
<div class="a" style="left:343px;top:1317px;width:1001px;height:18px;background:#fafafa"></div>
<svg style="left:351px;top:1321px" width="8" height="11"><path d="M8 0L0 5.500 8 11z" fill="#8a8a8a"/></svg>
<div class="a" style="left:368px;top:1322px;width:449px;height:9px;background:#8f8f8f;border-radius:5px"></div>
<svg style="left:1327px;top:1321px" width="8" height="11"><path d="M0 0L8 5.500 0 11z" fill="#8a8a8a"/></svg>

<!-- footer -->
<div class="a" style="left:1128px;top:1343px;font-size:15px;line-height:19px;color:#343a40">Showing all 140 rows</div>
<div class="a" style="left:1277px;top:1338px;width:83px;height:28px;background:#66a3fb;border-radius:4px;color:#e4eefe;font-size:13.200px;line-height:29px;text-align:center">Show more</div>
<div class="a" style="left:0;top:1351px;width:450px;height:16px;background:#25282b;border-radius:0 4px 0 0;color:#dcdcdc;font-size:12.700px;line-height:24px;overflow:hidden">temporaryviva0616.signalsresearch-dev.revvitycloud.net/snconfig/metadata</div>
</body></html>
